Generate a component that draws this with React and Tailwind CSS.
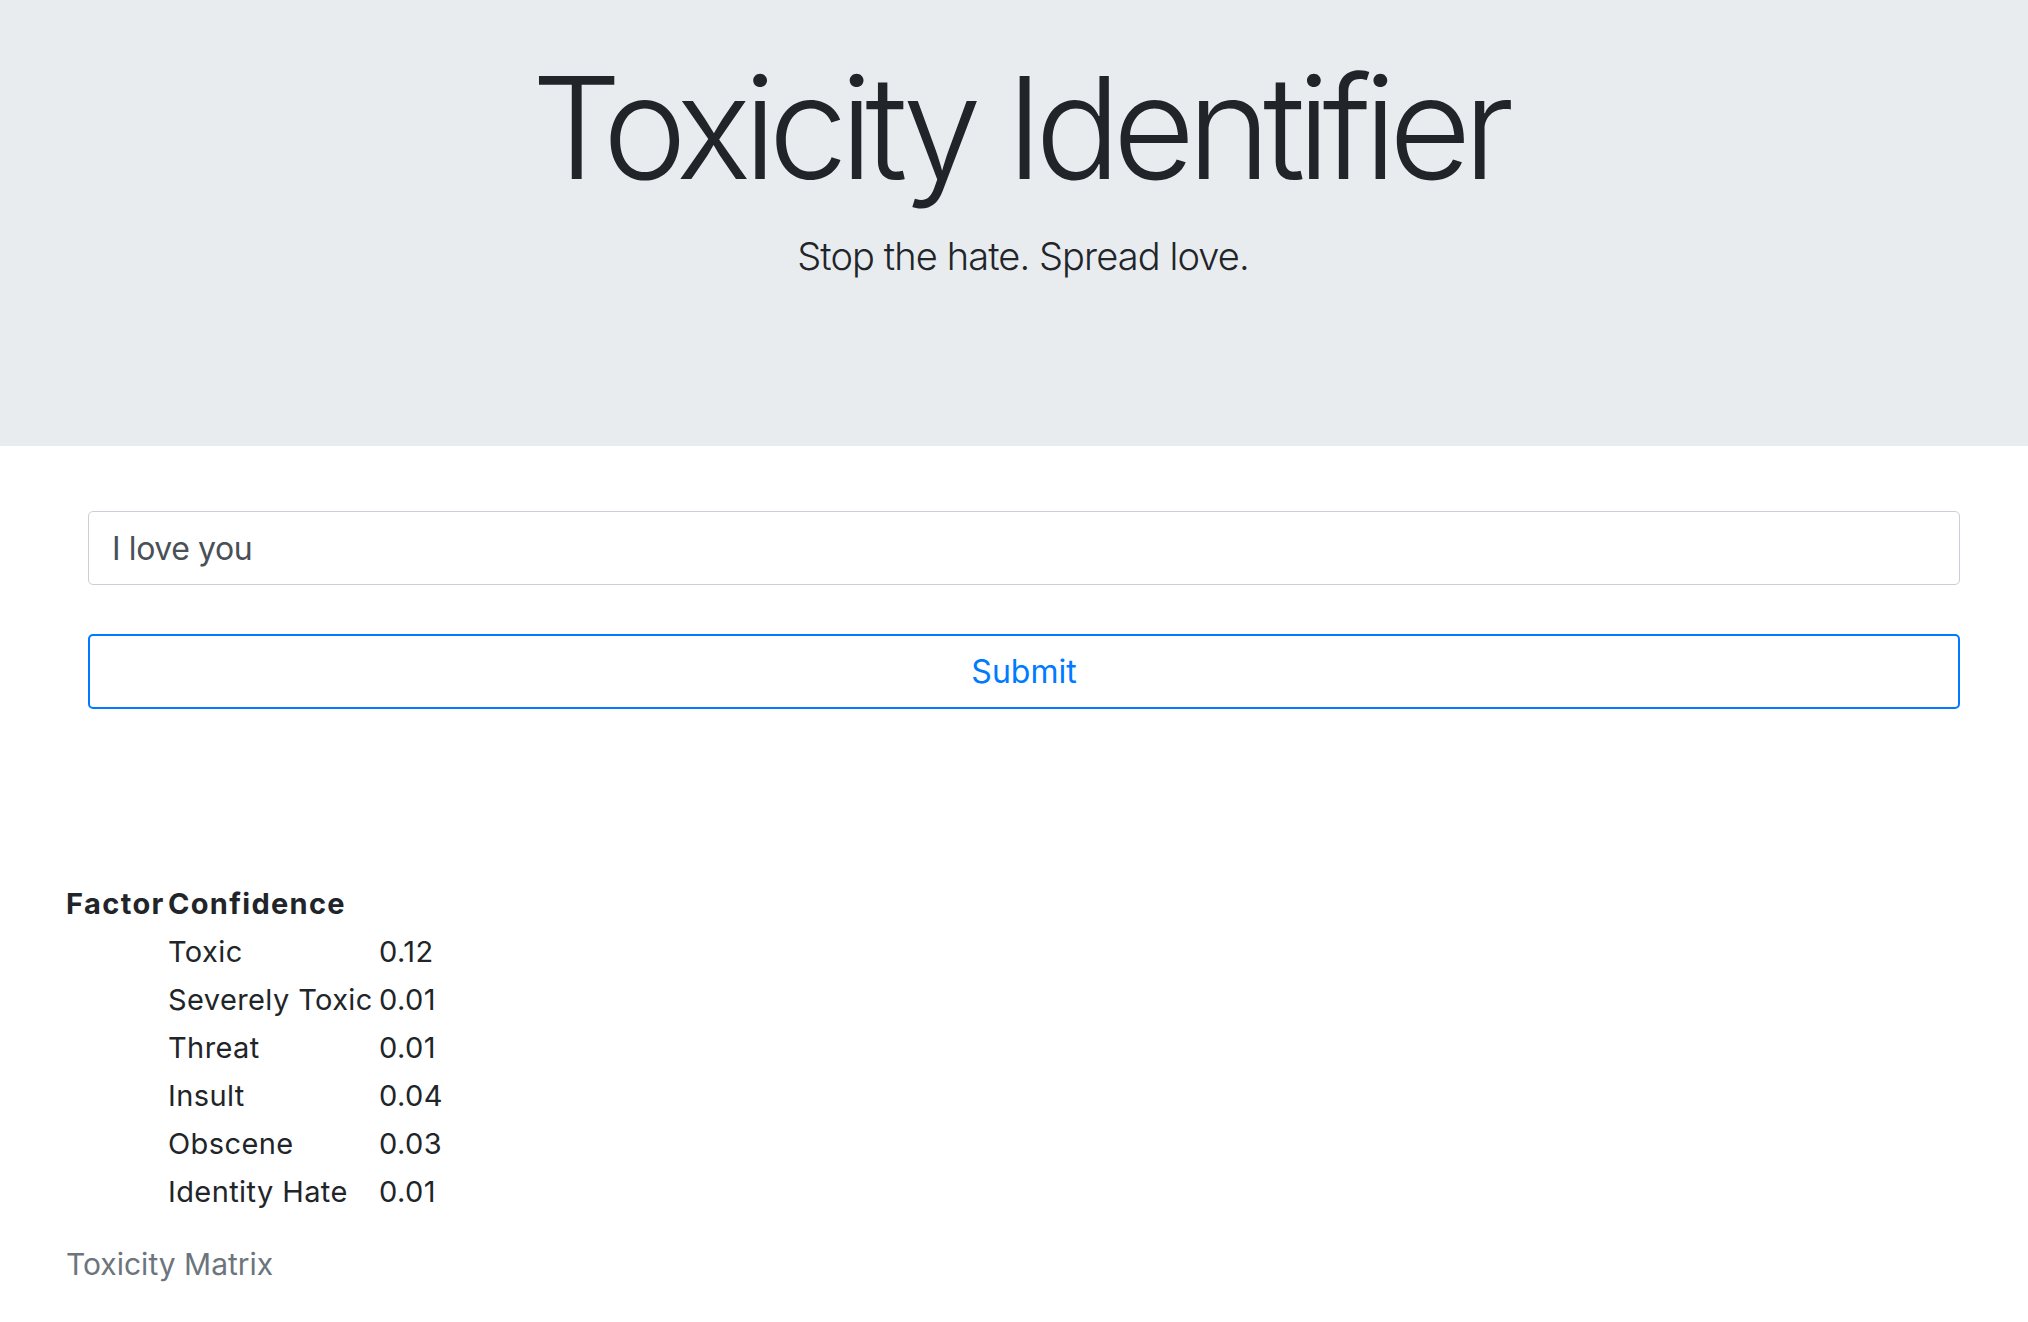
const ROWS = [
  ['Toxic', '0.12'],
  ['Severely Toxic', '0.01'],
  ['Threat', '0.01'],
  ['Insult', '0.04'],
  ['Obscene', '0.03'],
  ['Identity Hate', '0.01'],
];

export default function App() {
  return (
    <div className="min-h-[1322px] bg-white text-[#212529]" style={{ fontFamily: 'Inter, "Noto Sans", sans-serif' }}>
      {/* Jumbotron */}
      <header className="h-[446px] bg-[#e9ecef] pt-[56px] pl-[18px] flex flex-col items-center">
        <h1 className="text-[142px] leading-none font-light tracking-[-7.9px] -ml-[8px]">Toxicity Identifier</h1>
        <p className="mt-[39px] text-[38px] leading-none font-light tracking-[-0.9px]">Stop the hate. Spread love.</p>
      </header>

      {/* Form */}
      <div className="ml-[88px] w-[1872px] flex flex-col">
        <input
          defaultValue="I love you"
          className="mt-[65px] h-[74px] px-[23px] rounded-[5px] border border-[#c9d0d7] text-[32px] tracking-[-0.4px] text-[#495057] outline-none"
        />
        <button className="mt-[49px] h-[75px] rounded-[5px] border-2 border-[#007bff] text-[32px] text-[#007bff]">
          Submit
        </button>
      </div>

      {/* Results */}
      <div className="ml-[66px] mt-[170px]">
        <table className="border-collapse text-[29px]">
          <thead>
            <tr className="h-[49px] leading-[48px]">
              <th className="p-0 w-[102px] text-left font-bold tracking-[1.4px]">Factor</th>
              <th className="p-0 w-[211px] text-left font-bold tracking-[1.3px]">Confidence</th>
              <th className="p-0"></th>
            </tr>
          </thead>
          <tbody className="tracking-[0.4px]">
            {ROWS.map(([name, val]) => (
              <tr key={name} className="h-[48px] leading-[48px]">
                <td className="p-0"></td>
                <td className="p-0 whitespace-nowrap">{name}</td>
                <td className="p-0">{val}</td>
              </tr>
            ))}
          </tbody>
        </table>
        <p className="mt-[24px] text-[30px] leading-[48px] text-[#6c757d]">Toxicity Matrix</p>
      </div>
    </div>
  );
}
